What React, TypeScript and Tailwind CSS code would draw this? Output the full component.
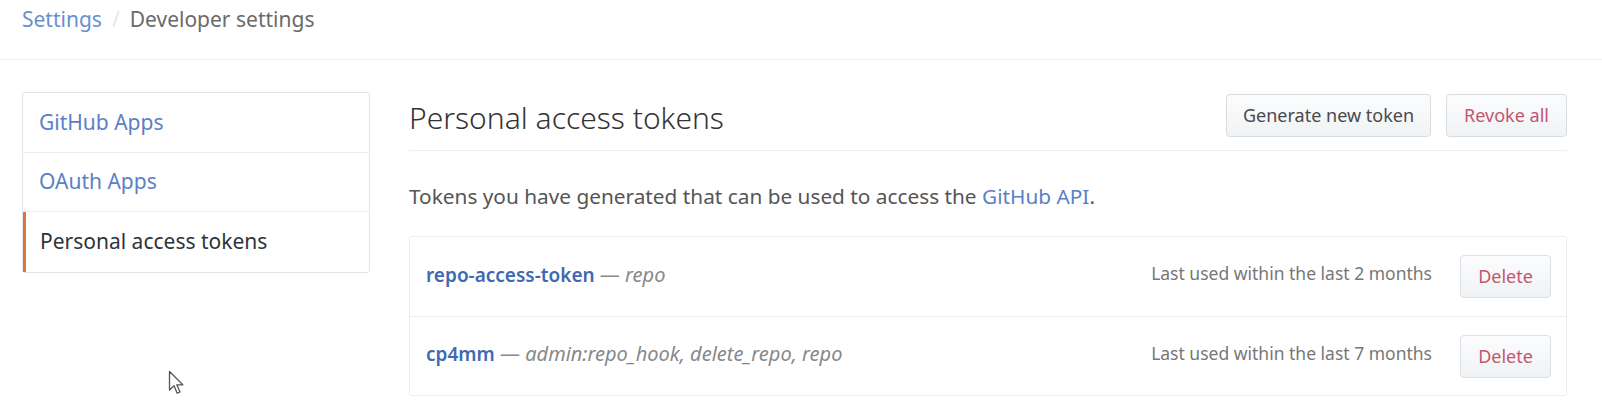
import React from "react";

const tokens = [
  {
    name: "repo-access-token",
    scopes: "repo",
    lastUsed: "Last used within the last 2 months",
  },
  {
    name: "cp4mm",
    scopes: "admin:repo_hook, delete_repo, repo",
    lastUsed: "Last used within the last 7 months",
  },
];

function Cursor() {
  return (
    <svg
      className="absolute left-[168px] top-[370px]"
      width="18"
      height="26"
      viewBox="0 0 18 26"
    >
      <path
        d="M1.5 1.5 L1.5 20 L6 15.8 L9.2 23.2 L12 22 L8.8 14.8 L14.8 14.8 Z"
        fill="#fff"
        stroke="#555"
        strokeWidth="1.3"
        strokeLinejoin="round"
      />
    </svg>
  );
}

export default function App() {
  return (
    <div
      className="relative w-[1602px] h-[414px] bg-white overflow-hidden"
      style={{ fontFamily: '"Noto Sans", "Open Sans", Arial, sans-serif' }}
    >
      {/* Breadcrumb */}
      <div className="h-[60px] border-b border-[#f1f1f1] flex items-start pl-[22px] pt-[4px] text-[21px]">
        <a className="text-[#6b8fcc]">Settings</a>
        <span className="mx-[10px] text-[#e6e6e6]">/</span>
        <span className="text-[#6a6a6a]">Developer settings</span>
      </div>

      <div className="flex pl-[22px] pt-[32px] gap-[39px]">
        {/* Sidebar */}
        <nav className="w-[348px] shrink-0 h-[181px] border border-[#e4e4e4] rounded-[3px] flex flex-col text-[21px]">
          <a className="h-[60px] flex items-center pl-[16px] border-b border-[#ececec] text-[#5b80c4]">
            GitHub Apps
          </a>
          <a className="h-[59px] flex items-center pl-[16px] border-b border-[#ececec] text-[#5b80c4]">
            OAuth Apps
          </a>
          <a className="flex-1 flex items-center pl-[14px] border-l-[3px] border-[#d8773f] text-[#2f3439]">
            Personal access tokens
          </a>
        </nav>

        {/* Main */}
        <main className="w-[1158px]">
          <div className="h-[59px] flex items-start justify-between border-b border-[#eeeeee]">
            <h2 className="text-[30px] font-light text-[#333] leading-none mt-[11px]">
              Personal access tokens
            </h2>
            <div className="flex gap-[15px] mt-[2px]">
              <button className="h-[43px] w-[205px] rounded-[4px] border border-[#d8dbdf] bg-gradient-to-b from-[#fbfcfd] to-[#f0f3f5] text-[18px] text-[#4a4a4a]">
                Generate new token
              </button>
              <button className="h-[43px] w-[121px] rounded-[4px] border border-[#d8dbdf] bg-gradient-to-b from-[#fbfcfd] to-[#f0f3f5] text-[18px] text-[#c2566f]">
                Revoke all
              </button>
            </div>
          </div>

          <p className="mt-[35px] text-[20.8px] text-[#555] leading-[21px]">
            Tokens you have generated that can be used to access the{" "}
            <a className="text-[#5b80c4]">GitHub API</a>.
          </p>

          <div className="mt-[29px] border border-[#ececec] rounded-[3px]">
            {tokens.map((t, i) => (
              <div
                key={t.name}
                className={`h-[79px] flex items-center pl-[16px] pr-[15px] ${
                  i > 0 ? "border-t border-[#ececec]" : ""
                }`}
              >
                <div className="flex-1 text-[20px] text-[#777] mb-[4px]">
                  <span className="font-semibold text-[19px] text-[#4169b0]">{t.name}</span>
                  <span className="text-[#888]"> — </span>
                  <em className="text-[#888]">{t.scopes}</em>
                </div>
                <span className="text-[17.5px] text-[#777] mr-[28px] mb-[6px]">{t.lastUsed}</span>
                <button className="h-[43px] w-[91px] rounded-[4px] border border-[#dcdfe3] bg-gradient-to-b from-[#fbfcfd] to-[#f0f3f5] text-[18px] text-[#c2566f]">
                  Delete
                </button>
              </div>
            ))}
          </div>
        </main>
      </div>

      <Cursor />
    </div>
  );
}
